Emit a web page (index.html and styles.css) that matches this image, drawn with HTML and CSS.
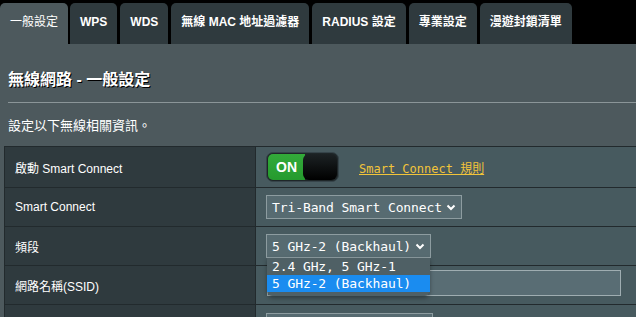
FILE: index.html
```html
<!DOCTYPE html>
<html>

<head>
    <meta charset="utf-8">
    <link rel="stylesheet" href="styles.css">
</head>

<body>
    <div class="tabs">
        <div class="tab active">一般設定</div>
        <div class="tab">WPS</div>
        <div class="tab">WDS</div>
        <div class="tab">無線 MAC 地址過濾器</div>
        <div class="tab">RADIUS 設定</div>
        <div class="tab">專業設定</div>
        <div class="tab">漫遊封鎖清單</div>
    </div>

    <div class="panel">
        <div class="title">無線網路 - 一般設定</div>
        <div class="divider"></div>
        <div class="desc">設定以下無線相關資訊。</div>

        <table class="form">
            <tr class="row-switch">
                <th>啟動 Smart Connect</th>
                <td>
                    <div class="switch-line">
                        <div class="switch">
                            <div class="switch-on">ON</div>
                            <div class="switch-knob"></div>
                        </div>
                        <a class="rule-link" href="#">Smart Connect 規則</a>
                    </div>
                </td>
            </tr>
            <tr>
                <th>Smart Connect</th>
                <td>
                    <div class="select">
                        <span>Tri-Band Smart Connect</span>
                        <svg class="chevron" width="10" height="7" viewBox="0 0 10 7"><path d="M1.5 1.5 L5 5 L8.5 1.5" fill="none" stroke="#fff" stroke-width="2"/></svg>
                    </div>
                </td>
            </tr>
            <tr>
                <th>頻段</th>
                <td>
                    <div class="select-wrap">
                        <div class="select">
                            <span>5 GHz-2 (Backhaul)</span>
                            <svg class="chevron" width="10" height="7" viewBox="0 0 10 7"><path d="M1.5 1.5 L5 5 L8.5 1.5" fill="none" stroke="#fff" stroke-width="2"/></svg>
                        </div>
                        <div class="dropdown">
                            <div class="option">2.4 GHz, 5 GHz-1</div>
                            <div class="option selected">5 GHz-2 (Backhaul)</div>
                        </div>
                    </div>
                </td>
            </tr>
            <tr>
                <th>網路名稱(SSID)</th>
                <td>
                    <div class="text-input"></div>
                </td>
            </tr>
            <tr class="row-last">
                <th></th>
                <td>
                    <div class="select wide">
                        <span>做為專用無線回傳網路</span>
                    </div>
                </td>
            </tr>
        </table>
    </div>
</body>

</html>
```

FILE: styles.css
```css
body {
    margin: 0;
    background-color: #000;
    font-family: "Liberation Sans", "Noto Sans CJK TC", sans-serif;
    color: #fff;
    overflow: hidden;
}

.tabs {
    display: flex;
    gap: 3px;
    height: 44px;
    padding-top: 3px;
    box-sizing: border-box;
}

.tab {
    background-color: #2f3a3e;
    color: #fff;
    font-size: 12px;
    font-weight: bold;
    padding: 0 10px;
    line-height: 39px;
    border-radius: 5px 5px 0 0;
}

.tab.active {
    background-color: #4d595d;
    font-weight: normal;
    margin-right: -1px;
}

.tab.wide-pad {
    padding: 0 11px;
}

.panel {
    background-color: #4d595d;
    padding-top: 26px;
    height: 300px;
}

.title {
    margin: 0 8px;
    font-size: 16px;
    line-height: 20px;
    font-weight: bold;
    text-shadow: 1px 1px 0 #000;
}

.divider {
    margin: 12px 0 0 8px;
    height: 1px;
    background-color: #8b9598;
}

.desc {
    margin: 15px 8px 12px;
    font-size: 13px;
    line-height: 16px;
}

.form {
    border-collapse: collapse;
    margin-left: 4px;
    width: 660px;
}

.form th,
.form td {
    border: 1px solid #222a2d;
    height: 38px;
    padding: 0 10px;
    font-size: 12px;
    text-align: left;
    vertical-align: middle;
}

.form th {
    width: 230px;
    background-color: #2f3a3e;
    font-weight: normal;
}

.form td {
    background-color: #475a5f;
}

.row-switch th,
.row-switch td {
    height: 40px;
}

.row-last td {
    vertical-align: top;
    padding-top: 8px;
}

.switch-line {
    display: flex;
    align-items: center;
}

.switch {
    display: flex;
    width: 73px;
    height: 30px;
    box-sizing: border-box;
    border: 1px solid #36444a;
    border-radius: 7px;
    background-color: #1e2628;
    padding: 1px;
}

.switch-on {
    width: 37px;
    background: linear-gradient(#33aa3a, #259a2e);
    border-radius: 5px 0 0 5px;
    font-size: 14px;
    font-weight: bold;
    line-height: 26px;
    padding-left: 8px;
    box-sizing: border-box;
}

.switch-knob {
    flex: 1;
    margin-left: -2px;
    background: linear-gradient(#1c2224, #000);
    border-radius: 6px;
}

.rule-link {
    margin-left: 20px;
    color: #f2c43a;
    font-family: "DejaVu Sans Mono", "Noto Sans CJK TC", monospace;
    font-size: 12px;
}

.select-wrap {
    position: relative;
    display: inline-block;
}

.select {
    display: inline-flex;
    align-items: center;
    gap: 4px;
    height: 24px;
    box-sizing: border-box;
    padding: 0 5px 0 5px;
    background-color: #576b71;
    border: 1px solid #8d9ca0;
    font-family: "DejaVu Sans Mono", "Noto Sans CJK TC", monospace;
    font-size: 13px;
    letter-spacing: -0.1px;
    color: #fff;
    vertical-align: middle;
}

.select.wide {
    width: 167px;
    height: 30px;
    align-items: flex-start;
    padding-top: 4px;
    overflow: hidden;
}

.chevron {
    display: block;
}

.dropdown {
    position: absolute;
    top: 100%;
    left: 1px;
    width: 163px;
    padding-bottom: 4px;
    background-color: #4f6065;
    border-radius: 0 0 6px 6px;
    box-shadow: 0 2px 4px rgba(0, 0, 0, 0.35);
    font-family: "DejaVu Sans Mono", "Noto Sans CJK TC", monospace;
    font-size: 13px;
    letter-spacing: -0.1px;
    z-index: 2;
}

.option {
    height: 17px;
    line-height: 17px;
    padding-left: 5px;
}

.option.selected {
    background-color: #1a8cf0;
}

.text-input {
    width: 354px;
    height: 26px;
    box-sizing: border-box;
    margin: 0 0 4px 1px;
    background-color: #596d74;
    border: 1px solid #9fadb1;
    vertical-align: middle;
}
```
